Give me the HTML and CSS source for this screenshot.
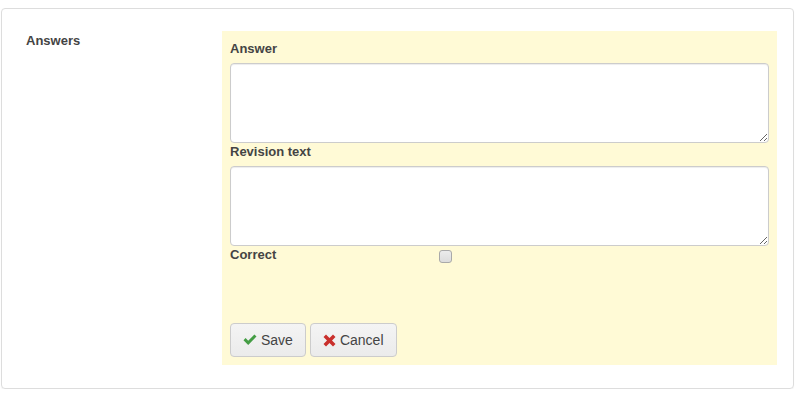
FILE: index.html
```html
<!DOCTYPE html>
<html lang="en">
  <head>
    <meta charset="UTF-8" />
    <title>Answers</title>
    <link rel="stylesheet" href="styles.css">
  </head>
  <body>
    <div class="panel">
      <div class="field-label">Answers</div>
      <div class="answer-box">
        <label class="label" for="answer">Answer</label>
        <textarea id="answer" class="text-input"></textarea>
        <label class="label" for="revision">Revision text</label>
        <textarea id="revision" class="text-input"></textarea>
        <div class="check-row">
          <label class="label check-label" for="correct">Correct</label>
          <input type="checkbox" id="correct" class="check" />
        </div>
        <div class="buttons">
          <button class="btn">
            <svg class="icon" width="14" height="12" viewBox="0 0 14 12">
              <path d="M0.5 6.2 L2.6 4.1 L5.2 6.7 L11.4 0.5 L13.5 2.6 L5.2 10.9 Z" fill="#449d44" />
            </svg>
            Save
          </button>
          <button class="btn">
            <svg class="icon" width="13" height="13" viewBox="0 0 13 13">
              <path d="M0.5 3 L3 0.5 L6.5 4 L10 0.5 L12.5 3 L9 6.5 L12.5 10 L10 12.5 L6.5 9 L3 12.5 L0.5 10 L4 6.5 Z" fill="#c9302c" />
            </svg>
            Cancel
          </button>
        </div>
      </div>
    </div>
  </body>
</html>
```

FILE: styles.css
```css
body {
  margin: 0;
  font-family: "Liberation Sans", Arial, sans-serif;
  color: #444;
  background-color: #fff;
}
.panel {
  margin: 8px 3px 0 1px;
  padding: 22px 16px 23px 24px;
  border: 1px solid #ddd;
  border-radius: 4px;
  box-shadow: 0 1px 1px rgba(0, 0, 0, 0.05);
  display: grid;
  grid-template-columns: 196px 555px;
  align-items: start;
}
.field-label {
  font-size: 13px;
  font-weight: bold;
  line-height: 18px;
  padding-top: 1px;
}
.answer-box {
  background-color: #fffad6; /* pale yellow */
  padding: 9px 8px 8px 8px;
  display: flex;
  flex-direction: column;
}
.label {
  display: block;
  font-size: 13px;
  font-weight: bold;
  line-height: 18px;
  margin-bottom: 5px;
}
.text-input {
  display: block;
  box-sizing: border-box;
  width: 100%;
  height: 80px;
  margin: 0;
  border: 1px solid #ccc;
  border-radius: 4px;
  box-shadow: inset 0 1px 1px rgba(0, 0, 0, 0.075);
  background-color: #fff;
  font-family: inherit;
}
.check-row {
  display: flex;
  align-items: flex-start;
  height: 18px;
}
.check-label {
  width: 209px;
  margin-bottom: 0;
}
.check {
  appearance: none;
  width: 13px;
  height: 13px;
  margin: 4px 0 0 0;
  border: 1px solid #a9a9a9;
  border-radius: 3px;
  background: linear-gradient(#ececec, #dcdcdc);
}
.buttons {
  display: flex;
  gap: 4px;
  margin-top: 59px;
}
.btn {
  display: flex;
  align-items: center;
  gap: 4px;
  height: 34px;
  padding: 6px 12px;
  font-family: inherit;
  font-size: 14px;
  color: #444;
  background: linear-gradient(#f4f4f4, #ebebeb);
  border: 1px solid #ccc;
  border-radius: 4px;
  cursor: pointer;
}
.btn:hover {
  background: #e6e6e6;
}
.icon {
  display: block;
}
```
